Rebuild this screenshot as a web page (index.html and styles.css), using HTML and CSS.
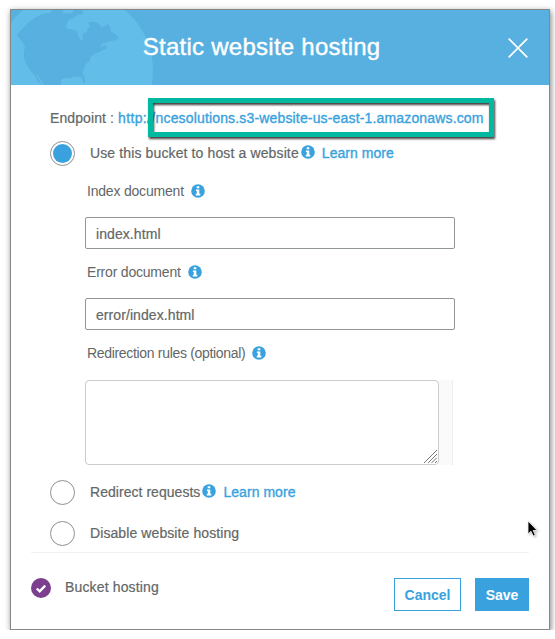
FILE: index.html
```html
<!DOCTYPE html>
<html lang="en">
<head>
<meta charset="utf-8">
<title>Static website hosting</title>
<link rel="stylesheet" href="styles.css">
</head>
<body>
<svg class="defs" width="0" height="0" aria-hidden="true">
  <symbol id="info" viewBox="0 0 14 14">
    <circle cx="7" cy="7" r="6.8" fill="#39a2de"/>
    <path d="M5.7 2.3h2.6v2H5.7zM4.9 5.4h3.4v4.4h1v1.7H4.8V9.8h1V7.1h-.9z" fill="#fff"/>
  </symbol>
</svg>
<main class="modal">
  <header class="header">
    <svg class="globe" viewBox="33 30 430 225" aria-hidden="true">
      <circle cx="222" cy="211" r="237" fill="#62bde8"/>
      <path d="M51 105L67 87 84 69 105 53 126 42 150 39 157 30H190L186 39 213 41 222 34 220 30H248L247 44 234 43 224 52 206 61 198 78 203 88 216 88 232 95 236 112 242 121 249 116 248 103 261 94 263 84 271 82 265 66 284 66 295 70 306 82 324 72 331 83 332 94 346 103 357 113 350 120 336 122 320 127 308 130 298 145 312 137 321 136 318 147 307 151 294 158 282 161 273 170 269 182 257 193 252 209 246 217 253 229 257 249 250 249 245 234 235 229 219 231 211 235 195 234 184 239 182 255H132L115 227 106 218 119 243 127 255 114 246 103 224 88 208 78 190 72 174 72 151 76 143 69 128Z" fill="#57b0df"/>
    </svg>
    <h1 class="title">Static website hosting</h1>
    <svg class="close" viewBox="0 0 20 20"><path d="M.7.7l18.6 18.6M19.3.7L.7 19.3" stroke="#fff" stroke-width="1.7"/></svg>
  </header>
  <section class="body">
    <div class="endpoint"><span class="t-label">Endpoint : </span><a class="t-http">http://</a><a class="t-host">ncesolutions.s3-website-us-east-1.amazonaws.com</a>
      <div class="highlight"></div>
    </div>
    <div class="option first"><span class="radio checked"></span><span class="t-use">Use this bucket to host a website</span><svg class="info"><use href="#info"/></svg><a class="learn">Learn more</a></div>
    <div class="fields">
      <div class="label"><span class="t-index">Index document</span><svg class="info"><use href="#info"/></svg></div>
      <div class="input"><span class="t-input">index.html</span></div>
      <div class="label"><span class="t-error">Error document</span><svg class="info"><use href="#info"/></svg></div>
      <div class="input"><span class="t-input">error/index.html</span></div>
      <div class="label"><span class="t-rules">Redirection rules (optional)</span><svg class="info"><use href="#info"/></svg></div>
      <div class="rules"><div class="area"><svg class="grip" viewBox="0 0 13 13"><path d="M0 13L13 0M4 13l9-9M7.5 13L13 7.5M11 13l2-2" stroke="#777" stroke-width="1"/></svg></div><div class="gutter"></div></div>
    </div>
    <div class="option second"><span class="radio"></span><span class="t-redirect">Redirect requests</span><svg class="info"><use href="#info"/></svg><a class="learn">Learn more</a></div>
    <div class="option third"><span class="radio"></span><span class="t-disable">Disable website hosting</span></div>
  </section>
  <footer class="footer">
    <svg class="check" viewBox="0 0 20 20"><circle cx="10" cy="10" r="10" fill="#7c3f8d"/><path d="M5.8 10.5l2.9 2.8 5.5-5.6" fill="none" stroke="#fff" stroke-width="2.4"/></svg>
    <span class="t-bucket">Bucket hosting</span>
    <button class="btn cancel">Cancel</button>
    <button class="btn save">Save</button>
  </footer>
  <svg class="cursor" viewBox="0 0 12 18"><path d="M1 1v13l3-2.7 2.2 4.7 2.1-1-2.1-4.5h4z" fill="#000" stroke="#fff" stroke-width=".8"/></svg>
</main>
</body>
</html>
```
FILE: styles.css
```css
* { box-sizing: border-box; }
body { margin: 0; background: #fff; overflow: hidden; font: 14px/18px "Liberation Sans", Arial, sans-serif; color: #636767; -webkit-text-stroke: .2px currentColor; }
.defs { position: absolute; }
svg { display: block; flex: none; }
span, a { white-space: pre; }
a { color: #39a2de; -webkit-text-stroke-width: .35px; }
.modal { position: relative; width: 540px; height: 621px; margin: 9px 0 0 10px; border: 1px solid #888; background: #fff; box-shadow: 1px 2px 6px rgba(0,0,0,.5); }
.header { height: 75px; background: #57b0df; display: flex; position: relative; overflow: hidden; }
.globe { width: 143.33px; height: 75px; margin-right: -11.5px; }
.title { margin: 22px 0 0; font-size: 24px; line-height: 30px; font-weight: 400; color: #fff; white-space: pre; -webkit-text-stroke-width: .4px; letter-spacing: .25px; }
.close { width: 20px; height: 20px; margin: 28px 21px 0 auto; }
.body { padding: 24px 0 0 39px; height: 467px; }
.endpoint { position: relative; height: 18px; display: flex; }
.t-label { letter-spacing: .1px; }
.t-http { letter-spacing: .35px; }
.t-host { letter-spacing: .16px; }
.t-use { letter-spacing: .125px; }
.t-index, .t-error { letter-spacing: -.2px; }
.t-rules { letter-spacing: -.32px; }
.t-input { letter-spacing: .08px; }
.t-redirect { letter-spacing: .04px; }
.t-disable { letter-spacing: .09px; }
.learn { letter-spacing: .05px; }
.highlight { position: absolute; left: 98px; top: -11px; width: 346px; height: 39px; border: 5px solid #00b9a0; filter: drop-shadow(1px 2px 1px rgba(35,25,25,.85)); }
.option { display: flex; align-items: center; height: 25px; }
.first { margin-top: 14px; }
.radio { width: 25px; height: 25px; border: 1px solid #8c9292; border-radius: 50%; margin-right: 15px; flex: none; }
.checked { padding: 2px; background: #39a2de content-box; }
.info { width: 14px; height: 14px; margin-left: 7px; }
.option .info { margin-left: 2px; margin-right: 7px; margin-top: -3px; }
.option > span:not(.radio), .learn { margin-top: -2px; }
.fields { padding-left: 35px; }
.label { height: 49px; display: flex; align-items: center; padding: 0 0 4px 2px; -webkit-text-stroke-width: 0; }
.fields .label:first-child { height: 51px; padding-bottom: 2px; }
.input + .label:nth-last-child(2) { height: 50px; }
.input { width: 370px; height: 32px; border: 1px solid #919797; border-radius: 2px; padding: 7px 10px; }
.rules { display: flex; height: 85px; }
.area { width: 354px; border: 1px solid #ccc; border-radius: 4px; display: flex; align-items: flex-end; justify-content: flex-end; padding: 1px; }
.grip { width: 13px; height: 13px; }
.gutter { width: 14px; background: #fafafa; border-right: 1px solid #eee; }
.second { margin-top: 15px; }
.third { margin-top: 16px; }
.footer { margin: 0 20px; height: 77px; border-top: 1px solid #f2f2f2; display: flex; }
.check { width: 20px; height: 20px; margin: 25px 14px 0 0; }
.t-bucket { margin-top: 25px; letter-spacing: .15px; }
.btn { height: 33px; border: 1px solid #39a2de; margin: 25px 0 0; padding: 0; font: bold 14px/18px "Liberation Sans", Arial, sans-serif; background: #fff; color: #39a2de; -webkit-text-stroke-width: 0; }
.cancel { width: 67px; margin-left: auto; }
.save { width: 54px; margin-left: 14px; background: #39a2de; color: #fff; }
.cursor { position: absolute; left: 516px; top: 510px; width: 12px; height: 18px; filter: drop-shadow(1px 1px 1px rgba(0,0,0,.3)); }
```
